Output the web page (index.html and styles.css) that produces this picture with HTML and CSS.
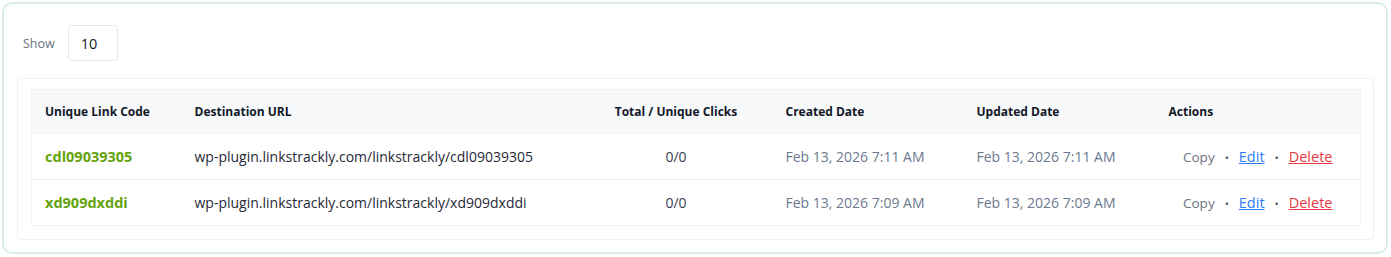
FILE: index.html
```html
<!DOCTYPE html>
<html lang="en">
<head>
<meta charset="utf-8">
<title>Links</title>
<link rel="stylesheet" href="styles.css">
</head>
<body>
<div class="card">
  <div class="show-row">
    <span class="show-label">Show</span>
    <div class="select">10</div>
  </div>
  <div class="table-wrap">
    <table class="links">
      <thead>
        <tr>
          <th class="c-code">Unique Link Code</th>
          <th class="c-url">Destination URL</th>
          <th class="c-clicks">Total / Unique Clicks</th>
          <th class="c-created">Created Date</th>
          <th class="c-updated">Updated Date</th>
          <th class="c-actions">Actions</th>
        </tr>
      </thead>
      <tbody>
        <tr>
          <td class="code">cdl09039305</td>
          <td class="url">wp-plugin.linkstrackly.com/linkstrackly/cdl09039305</td>
          <td class="clicks">0/0</td>
          <td class="date">Feb 13, 2026 7:11 AM</td>
          <td class="date">Feb 13, 2026 7:11 AM</td>
          <td class="actions"><span class="copy">Copy</span><span class="dot">•</span><a class="edit" href="#">Edit</a><span class="dot">•</span><a class="delete" href="#">Delete</a></td>
        </tr>
        <tr>
          <td class="code">xd909dxddi</td>
          <td class="url">wp-plugin.linkstrackly.com/linkstrackly/xd909dxddi</td>
          <td class="clicks">0/0</td>
          <td class="date">Feb 13, 2026 7:09 AM</td>
          <td class="date">Feb 13, 2026 7:09 AM</td>
          <td class="actions"><span class="copy">Copy</span><span class="dot">•</span><a class="edit" href="#">Edit</a><span class="dot">•</span><a class="delete" href="#">Delete</a></td>
        </tr>
      </tbody>
    </table>
  </div>
</div>
</body>
</html>
```
FILE: styles.css
```css
* { box-sizing: border-box; }
html, body { margin: 0; padding: 0; background: #fff; }
body {
  padding: 2px;
  font-family: "Open Sans", "Noto Sans", sans-serif;
  color: #1f2937;
}
.card {
  width: 1386px;
  height: 252px;
  border: 2px solid #dcede5;
  border-radius: 10px;
  padding: 13px 12px 13px 13px;
  background: #fff;
}
.show-row {
  display: flex;
  align-items: center;
  gap: 13px;
  padding: 8px 6px;
  height: 52px;
  margin-bottom: 9px;
}
.show-label {
  font-size: 12.5px;
  color: #6b7280;
}
.select {
  width: 50px;
  height: 36px;
  border: 1px solid #e5e7eb;
  border-radius: 4px;
  display: flex;
  align-items: center;
  padding-left: 12px;
  font-size: 14.5px;
  color: #111827;
}
.table-wrap {
  border: 1px solid #eef0f2;
  border-radius: 4px;
  padding: 10px 13px 13px;
}
.links {
  width: 1329px;
  table-layout: fixed;
  border-collapse: collapse;
  border: 1px solid #f1f3f5;
}
.links th {
  background: #f8f9fb;
  height: 44px;
  text-align: left;
  font-size: 12px;
  font-weight: 700;
  color: #111827;
  padding: 0 13px;
}
.links td {
  height: 46px;
  padding: 0 13px;
  font-size: 14px;
  border-top: 1px solid #f0f2f4;
  white-space: nowrap;
}
.c-code { width: 150px; }
.c-url { width: 398px; }
.links th.c-clicks { width: 193px; text-align: center; }
.c-created { width: 191px; }
.c-updated { width: 192px; }
.c-actions { width: 205px; }
.code { color: #65a30d; font-weight: 700; }
.links td.code { font-size: 14.5px; }
.url { color: #1f2937; }
.clicks { text-align: center; color: #374151; }
.date { color: #6b7a90; }
.actions { text-align: center; }
.copy { color: #6b7280; font-size: 13.5px; }
.dot { color: #4b5563; font-size: 11px; margin: 0 10px; }
.edit { color: #2f7df6; font-size: 14.5px; }
.delete { color: #e5393f; font-size: 14.5px; }
```
